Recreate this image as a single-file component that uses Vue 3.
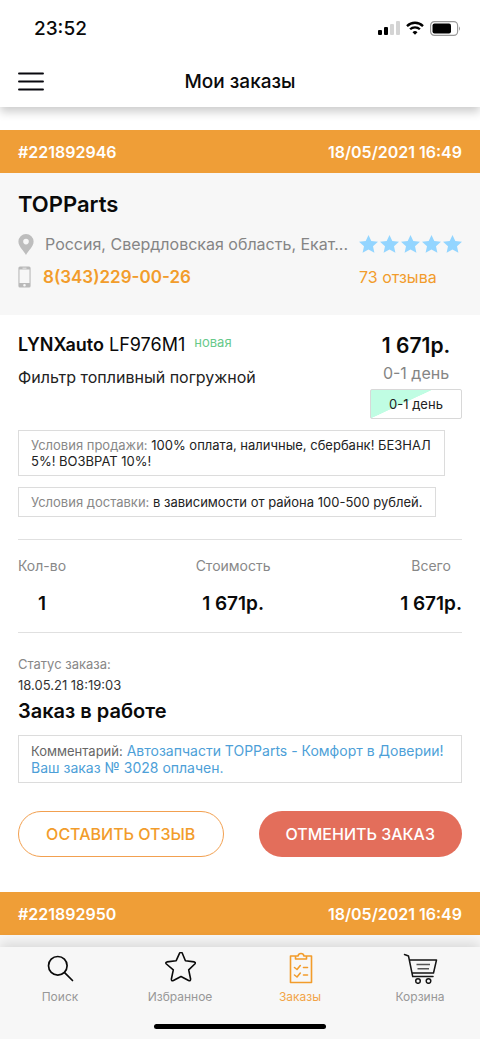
<script setup>
const order = {
  number: '#221892946',
  date: '18/05/2021 16:49',
}
const nextOrder = {
  number: '#221892950',
  date: '18/05/2021 16:49',
}
</script>

<template>
  <div class="page">
    <div class="status-bar">
      <span class="clock">23:52</span>
      <div class="indicators">
        <svg width="22" height="14" viewBox="0 0 22 14" aria-hidden="true">
          <rect x="0" y="9" width="4" height="5" rx="1" />
          <rect x="6" y="6" width="4" height="8" rx="1" />
          <rect x="12" y="3" width="4" height="11" rx="1" fill="#d4d4d4" />
          <rect x="18" y="0" width="4" height="14" rx="1" fill="#d4d4d4" />
        </svg>
        <svg width="18" height="14" viewBox="0 0 18 14" fill="none" stroke="#000" stroke-width="2.3" aria-hidden="true">
          <path d="M1 5.1C5.5.6 12.500.6 17 5.100" />
          <path d="M4.100 8.300C6.800 5.600 11.200 5.600 13.900 8.300" />
          <path d="M9 13.700 6.500 11.200Q9 9 11.500 11.200Z" fill="#000" stroke="none" />
        </svg>
        <svg width="31" height="15" viewBox="0 0 31 15" aria-hidden="true">
          <rect x=".6" y=".6" width="27" height="13.800" rx="3.800" fill="none" stroke="#999" stroke-width="1.200" />
          <rect x="2.500" y="2.500" width="18.500" height="10" rx="2" />
          <path d="M29 5.200Q31 7.500 29 9.800Z" fill="#999" />
        </svg>
      </div>
    </div>

    <header class="header">
      <button class="menu" type="button" aria-label="Меню">
        <svg width="26" height="20" viewBox="0 0 26 20" stroke="#08080e" stroke-width="1.900" stroke-linecap="round" aria-hidden="true">
          <path d="M1 1.500H25M1 9.500H25M1 17.500H25" />
        </svg>
      </button>
      <h1>Мои заказы</h1>
    </header>

    <main class="content">
      <article>
        <div class="order-bar">
          <span>{{ order.number }}</span>
          <time>{{ order.date }}</time>
        </div>

        <section class="shop">
          <h2>TOPParts</h2>
          <div class="shop-row">
            <svg class="pin" width="16" height="21" viewBox="0 0 16 21" aria-hidden="true">
              <path fill="#bdbdbd" fill-rule="evenodd" d="M8 0A7.600 7.600 0 0 0 .4 7.600C.4 13 6 17 8 21 10 17 15.600 13 15.600 7.600A7.600 7.600 0 0 0 8 0ZM8 4.800A2.800 2.800 0 1 1 8 10.400 2.800 2.800 0 0 1 8 4.800Z" />
            </svg>
            <span class="address">Россия, Свердловская область, Екат...</span>
            <div class="rating" role="img" aria-label="5 из 5">
              <svg v-for="n in 5" :key="n" width="19" height="18" viewBox="0 0 19 18" aria-hidden="true">
                <path fill="#93d5ff" d="M9.500 0 12.300 6 19 6.700 14 11.200 15.400 17.800 9.500 14.500 3.600 17.800 5 11.200 0 6.700 6.700 6Z" />
              </svg>
            </div>
          </div>
          <div class="shop-row">
            <svg class="phone-icon" width="13" height="22" viewBox="0 0 13 22" aria-hidden="true">
              <path fill="#b9b9b9" fill-rule="evenodd" d="M2 .5H11Q12.600.5 12.600 2V20Q12.600 21.500 11 21.500H2Q.4 21.500.4 20V2Q.4.500 2 .5ZM1.500 3.500V17H11.500V3.500ZM6.500 18A1.300 1.300 0 1 0 6.500 20.600 1.300 1.300 0 0 0 6.500 18ZM4.500 1.700V2.400H8.500V1.700Z" />
            </svg>
            <a class="phone" href="tel:83432290026">8(343)229-00-26</a>
            <a class="reviews" href="#reviews">73 отзыва</a>
          </div>
        </section>

        <section class="details">
          <div class="product">
            <div class="product-info">
              <h3><b>LYNXauto</b> LF976M1 <span class="tag">новая</span></h3>
              <p>Фильтр топливный погружной</p>
            </div>
            <div class="offer">
              <strong>1 671р.</strong>
              <span class="term">0-1 день</span>
              <span class="term-badge">0-1 день</span>
            </div>
          </div>

          <p class="note"><span>Условия продажи:</span> 100% оплата, наличные, сбербанк! БЕЗНАЛ 5%! ВОЗВРАТ 10%!</p>
          <p class="note"><span>Условия доставки:</span> в зависимости от района 100-500 рублей.</p>

          <table>
            <thead>
              <tr><th class="side">Кол-во</th><th>Стоимость</th><th class="side">Всего</th></tr>
            </thead>
            <tbody>
              <tr><td>1</td><td>1 671р.</td><td>1 671р.</td></tr>
            </tbody>
          </table>

          <div class="state">
            <span class="state-label">Статус заказа:</span>
            <time>18.05.21 18:19:03</time>
            <strong>Заказ в работе</strong>
          </div>
          <p class="comment"><span>Комментарий:</span> Автозапчасти TOPParts - Комфорт в Доверии! Ваш заказ № 3028 оплачен.</p>

          <div class="actions">
            <button class="review-button" type="button">ОСТАВИТЬ ОТЗЫВ</button>
            <button class="cancel-button" type="button">ОТМЕНИТЬ ЗАКАЗ</button>
          </div>
        </section>
      </article>

      <article class="next">
        <div class="order-bar">
          <span>{{ nextOrder.number }}</span>
          <time>{{ nextOrder.date }}</time>
        </div>
      </article>
    </main>

    <nav class="tabs">
      <a href="#search">
        <svg width="32" height="32" viewBox="0 0 32 32" fill="none" stroke="#0a0a0a" stroke-width="1.700" stroke-linecap="round" aria-hidden="true">
          <circle cx="13.800" cy="13.800" r="9.300" /><path d="M20.600 20.600 28.500 28.500" />
        </svg>
        <span>Поиск</span>
      </a>
      <a href="#favorites">
        <svg width="32" height="32" viewBox="0 0 32 32" fill="none" stroke="#0a0a0a" stroke-width="1.600" stroke-linejoin="round" aria-hidden="true">
          <path d="M15.600 1.200Q17 -.6 18.300 1.200L21.400 8.700 30.300 9.900Q32 10.500 30.800 12L24.700 17.800 26.600 27Q26.600 29.300 24.600 28.500L17 24.500 9.400 28.500Q7.200 29.300 7.400 27L9.300 17.800 2.400 12Q1 10.500 3 9.900L12.200 8.700Z" />
        </svg>
        <span>Избранное</span>
      </a>
      <a class="active" href="#orders" aria-current="page">
        <svg width="32" height="32" viewBox="0 0 32 32" fill="none" stroke="#f29c2b" stroke-width="1.600" stroke-linejoin="round" aria-hidden="true">
          <path d="M11.500 4H6.500V30.500H27.500V4H22.500M11.500 7V4H14Q14.500 1.500 17 1.500T20 4H22.500V7Z" />
          <path stroke-linecap="round" d="M10.500 15.500 13 17.500 16.300 13.500M19.500 15.500H23.500M10.500 23 13 25 16.300 21M19.500 23H23.500" />
        </svg>
        <span>Заказы</span>
      </a>
      <a href="#cart">
        <svg width="36" height="32" viewBox="0 0 36 32" fill="none" stroke="#151515" stroke-width="1.500" stroke-linejoin="round" aria-hidden="true">
          <path stroke-linecap="round" d="M2.500 2.500 6.500 4 10.700 24.500H31M7.500 8H34.500L31.500 21H10" />
          <path stroke="#555" d="M14.500 12.500H28M15.500 16.800H27" />
          <circle cx="16" cy="29" r="2.300" /><circle cx="26.500" cy="29" r="2.300" />
        </svg>
        <span>Корзина</span>
      </a>
      <div class="home-indicator"></div>
    </nav>
  </div>
</template>

<style>
body {
  background: #fff;
}
</style>

<style scoped>
* {
  box-sizing: border-box;
}

.page {
  display: flex;
  flex-direction: column;
  height: 100vh;
  overflow: hidden;
  background: #fff;
  color: #0a0a0a;
  font-family: Inter, "Liberation Sans", sans-serif;
}

h1, h2, h3, p {
  margin: 0;
}

a {
  text-decoration: none;
}

button {
  padding: 0;
  font-family: inherit;
  cursor: pointer;
}

svg {
  display: block;
  flex: none;
}

.status-bar {
  position: relative;
  z-index: 2;
  display: flex;
  flex: none;
  align-items: center;
  justify-content: space-between;
  height: 56px;
  padding: 0 19px 0 34px;
  background: #fff;
}

.clock {
  font-size: 19px;
  font-weight: 500;
}

.indicators {
  display: flex;
  align-items: center;
  gap: 6px;
}

.header {
  position: relative;
  z-index: 1;
  display: grid;
  flex: none;
  grid-template-columns: 26px 1fr 26px;
  align-items: center;
  height: 51px;
  padding: 0 18px;
  background: #fff;
  box-shadow: 0 5px 9px rgba(0, 0, 0, 0.2);
}

.menu {
  border: 0;
  background: none;
}

h1 {
  font-size: 19px;
  font-weight: 500;
  line-height: 24px;
  text-align: center;
}

.content {
  flex: 1;
  min-height: 0;
  overflow-y: auto;
  padding-top: 23px;
  scrollbar-width: none;
}

.order-bar {
  display: flex;
  align-items: center;
  justify-content: space-between;
  height: 43px;
  padding: 0 18px;
  background: #ef9e37;
  color: #fff;
  font-size: 16px;
  font-weight: 600;
}

.shop {
  padding: 17px 18px 27px;
  background: #f7f7f7;
}

h2 {
  margin-bottom: 15px;
  font-size: 22px;
  font-weight: 600;
  line-height: 28px;
}

.shop-row {
  display: flex;
  align-items: center;
  height: 22px;
  font-size: 16px;
}

.shop-row + .shop-row {
  margin-top: 11px;
}

.address {
  flex: 1;
  min-width: 0;
  margin-left: 11px;
  color: #858585;
  white-space: nowrap;
}

.rating {
  display: flex;
  gap: 2px;
}

.phone {
  flex: 1;
  margin-left: 12px;
  color: #f29c2b;
  font-size: 17px;
  font-weight: 600;
}

.reviews {
  width: 103px;
  color: #f29c2b;
}

.details {
  padding: 15px 18px 35px;
}

.product {
  display: flex;
  justify-content: space-between;
  margin-bottom: 11px;
}

.product-info {
  padding-top: 2px;
}

h3 {
  font-size: 18px;
  font-weight: 400;
  line-height: 26px;
}

h3 b {
  font-weight: 600;
}

.tag {
  display: inline-block;
  margin-left: 4px;
  color: #67c98a;
  font-size: 13px;
  line-height: 16px;
  vertical-align: 4px;
}

.product-info p {
  margin-top: 7px;
  color: #222;
  font-size: 16px;
  line-height: 24px;
}

.offer {
  display: flex;
  flex-direction: column;
  align-items: center;
  width: 92px;
  padding-top: 1px;
}

.offer strong {
  font-size: 21px;
  font-weight: 600;
  line-height: 30px;
}

.term {
  margin: 1px 0 5px;
  color: #858585;
  font-size: 16px;
  line-height: 22px;
}

.term-badge {
  width: 100%;
  border: 1px solid #d8d8d8;
  border-radius: 2px;
  background: linear-gradient(155deg, #c0fde3 40%, #fff 41%);
  color: #222;
  font-size: 13px;
  line-height: 28px;
  text-align: center;
}

.note,
.comment {
  padding: 6px 12px;
  border: 1px solid #dcdcdc;
  color: #222;
}

.note {
  width: fit-content;
  max-width: 427px;
  margin-bottom: 11px;
  font-size: 13px;
  line-height: 16px;
}

.note span {
  color: #888;
}

table {
  width: 100%;
  margin-top: 22px;
  border-top: 1px solid #e0e0e0;
  border-bottom: 1px solid #e0e0e0;
  border-collapse: collapse;
  text-align: center;
}

th {
  padding: 16px 0 9px;
  color: #888;
  font-size: 14px;
  font-weight: 400;
  line-height: 20px;
}

.side {
  width: 1px;
  white-space: nowrap;
}

td {
  padding: 6px 0 16px;
  font-size: 19px;
  font-weight: 600;
  line-height: 25px;
  white-space: nowrap;
}

.state {
  display: flex;
  flex-direction: column;
  margin: 21px 0 9px;
  font-size: 13px;
  line-height: 20px;
}

.state-label {
  color: #888;
}

.state time {
  margin-top: 1px;
  color: #333;
}

.state strong {
  margin-top: 1px;
  font-size: 20px;
  font-weight: 600;
  line-height: 30px;
}

.comment {
  color: #4d9fd8;
  font-size: 14px;
  line-height: 17px;
}

.comment span {
  color: #666;
  font-size: 13px;
  line-height: 13px;
}

.actions {
  display: flex;
  gap: 35px;
  margin-top: 28px;
}

.actions button {
  flex: 1;
  height: 46px;
  border-radius: 23px;
  font-size: 16px;
  font-weight: 500;
  white-space: nowrap;
}

.review-button {
  border: 1px solid #f2a050;
  background: #fff;
  color: #f29c2b;
}

.cancel-button {
  border: 0;
  background: #e36e5b;
  color: #fff;
}

.next {
  padding-bottom: 12px;
  background: #f7f7f7;
}

.tabs {
  position: relative;
  z-index: 1;
  display: grid;
  flex: none;
  grid-template-columns: repeat(4, 1fr);
  height: 92px;
  padding-top: 5px;
  background: #f7f7f7;
  box-shadow: 0 -4px 12px rgba(0, 0, 0, 0.12);
}

.tabs a {
  display: flex;
  flex-direction: column;
  align-items: center;
  gap: 5px;
  color: #989898;
  font-size: 12px;
  line-height: 16px;
}

.tabs .active {
  color: #f2a448;
}

.home-indicator {
  position: absolute;
  bottom: 10px;
  left: 50%;
  width: 172px;
  height: 5px;
  margin-left: -86px;
  border-radius: 3px;
  background: #000;
}
</style>
